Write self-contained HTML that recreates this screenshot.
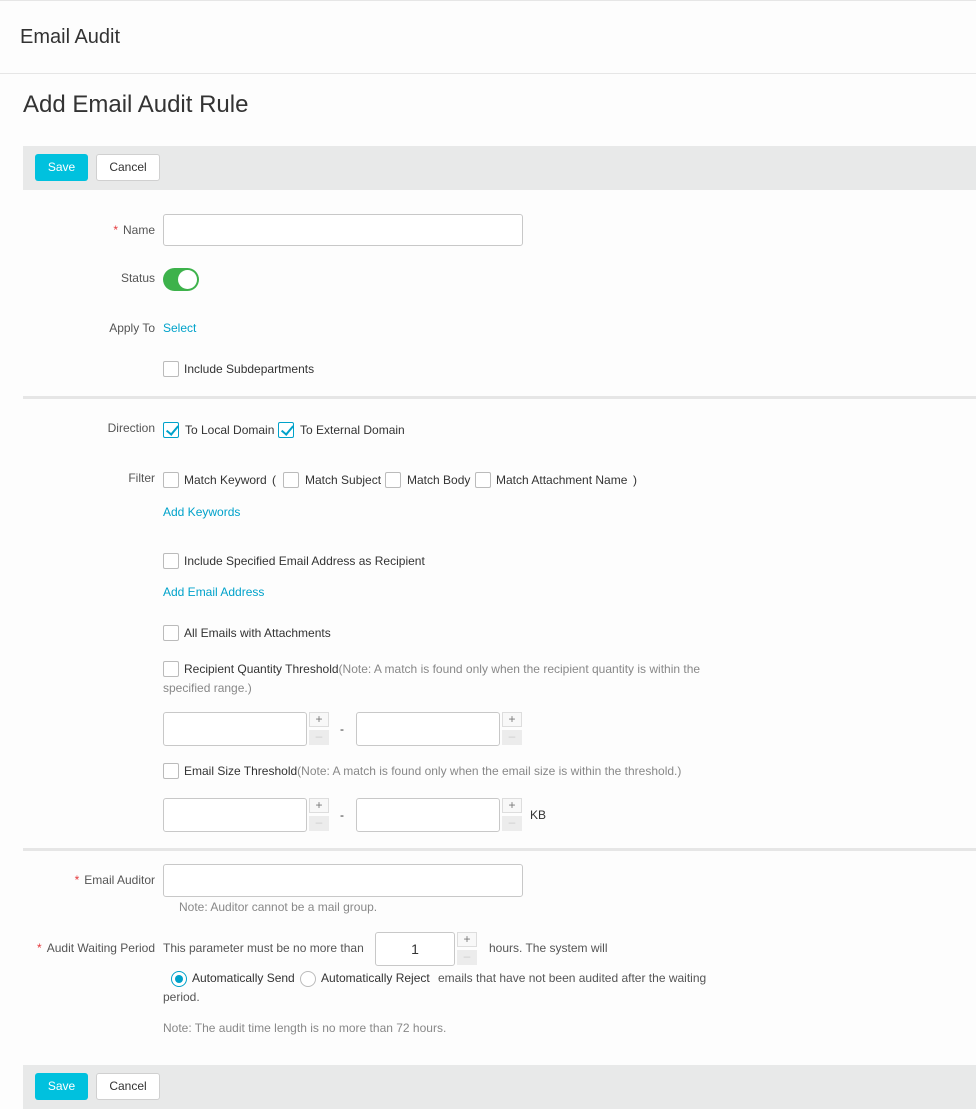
<!DOCTYPE html>
<html><head><meta charset="utf-8"><style>
*{box-sizing:border-box;margin:0;padding:0}
body{width:976px;height:1107px;background:#fdfdfd;font-family:"Liberation Sans",Arial,sans-serif;font-size:12px;color:#333;position:relative;overflow:hidden}
.a{position:absolute;white-space:nowrap}
.lbl{position:absolute;right:821px;color:#555;font-size:12px;white-space:nowrap}
.star{color:#e4393c;margin-right:5px}
.inp{position:absolute;border:1px solid #c8c8c8;border-radius:3px;background:#fff}
.cb{position:absolute;width:16px;height:16px;border:1px solid #bbb;border-radius:2px;background:#fff}
.cb.on{border-color:#00a2ca}
.cb.on:after{content:"";position:absolute;left:5px;top:0px;width:5px;height:10px;border:solid #00a2ca;border-width:0 2px 2px 0;transform:rotate(40deg)}
.link{color:#00a2ca}
.note{color:#888}
.bar{position:absolute;left:23px;width:953px;height:44px;background:#e8e9e9}
.save{position:absolute;left:12px;top:8px;width:53px;height:27px;background:#00c1de;color:#fff;border-radius:3px;text-align:center;line-height:27px}
.cancel{position:absolute;left:73px;top:8px;width:64px;height:27px;background:#fff;border:1px solid #d0d0d0;border-radius:3px;text-align:center;line-height:25px;color:#333}
.div{position:absolute;left:23px;width:953px;height:3px;background:#e6e6e6}
.sp{position:absolute;width:20px;height:15px;border:1px solid #ddd;background:#f8f8f8;color:#777;text-align:center;line-height:12px;font-size:12px}
.sm{position:absolute;width:20px;height:15px;background:#ececec;color:#ccc;text-align:center;line-height:12px}
</style></head><body>
<div class="a" style="left:0;top:0;width:976px;height:1px;background:#e6e6e6"></div>
<div class="a" style="left:20px;top:26px;font-size:20px;color:#333">Email Audit</div>
<div class="a" style="left:0;top:73px;width:976px;height:1px;background:#e6e6e6"></div>
<div class="a" style="left:23px;top:91px;font-size:24px;color:#333">Add Email Audit Rule</div>
<div class="bar" style="top:146px"><div class="save">Save</div><div class="cancel">Cancel</div></div>

<div class="lbl" style="top:223px"><span class="star">*</span>Name</div>
<div class="inp" style="left:163px;top:214px;width:360px;height:32px"></div>
<div class="lbl" style="top:271px">Status</div>
<div class="a" style="left:163px;top:268px;width:36px;height:23px;border-radius:12px;background:#3db24b"><div style="position:absolute;right:2px;top:2px;width:19px;height:19px;border-radius:50%;background:#fff"></div></div>
<div class="lbl" style="top:321px">Apply To</div>
<div class="a link" style="left:163px;top:321px">Select</div>
<div class="cb" style="left:163px;top:361px"></div><div class="a" style="left:184px;top:362px">Include Subdepartments</div>

<div class="div" style="top:396px"></div>

<div class="lbl" style="top:421px">Direction</div>
<div class="cb on" style="left:163px;top:422px"></div><div class="a" style="left:185px;top:423px">To Local Domain</div>
<div class="cb on" style="left:278px;top:422px"></div><div class="a" style="left:300px;top:423px">To External Domain</div>

<div class="lbl" style="top:471px">Filter</div>
<div class="cb" style="left:163px;top:472px"></div><div class="a" style="left:184px;top:473px">Match Keyword</div><div class="a" style="left:272px;top:473px">(</div>
<div class="cb" style="left:283px;top:472px"></div><div class="a" style="left:305px;top:473px">Match Subject</div>
<div class="cb" style="left:385px;top:472px"></div><div class="a" style="left:407px;top:473px">Match Body</div>
<div class="cb" style="left:475px;top:472px"></div><div class="a" style="left:496px;top:473px">Match Attachment Name</div><div class="a" style="left:633px;top:473px">)</div>
<div class="a link" style="left:163px;top:505px">Add Keywords</div>
<div class="cb" style="left:163px;top:553px"></div><div class="a" style="left:184px;top:554px">Include Specified Email Address as Recipient</div>
<div class="a link" style="left:163px;top:585px">Add Email Address</div>
<div class="cb" style="left:163px;top:625px"></div><div class="a" style="left:184px;top:626px">All Emails with Attachments</div>
<div class="cb" style="left:163px;top:661px"></div><div class="a" style="left:184px;top:662px">Recipient Quantity Threshold<span class="note">(Note: A match is found only when the recipient quantity is within the</span></div>
<div class="a note" style="left:163px;top:681px">specified range.)</div>

<div class="inp" style="left:163px;top:712px;width:144px;height:34px"></div>
<div class="sp" style="left:309px;top:712px">+</div><div class="sm" style="left:309px;top:730px">–</div>
<div class="a" style="left:340px;top:722px">-</div>
<div class="inp" style="left:356px;top:712px;width:144px;height:34px"></div>
<div class="sp" style="left:502px;top:712px">+</div><div class="sm" style="left:502px;top:730px">–</div>

<div class="cb" style="left:163px;top:763px"></div><div class="a" style="left:184px;top:764px">Email Size Threshold<span class="note">(Note: A match is found only when the email size is within the threshold.)</span></div>
<div class="inp" style="left:163px;top:798px;width:144px;height:34px"></div>
<div class="sp" style="left:309px;top:798px">+</div><div class="sm" style="left:309px;top:816px">–</div>
<div class="a" style="left:340px;top:808px">-</div>
<div class="inp" style="left:356px;top:798px;width:144px;height:34px"></div>
<div class="sp" style="left:502px;top:798px">+</div><div class="sm" style="left:502px;top:816px">–</div>
<div class="a" style="left:530px;top:808px">KB</div>

<div class="div" style="top:848px"></div>

<div class="lbl" style="top:873px"><span class="star">*</span>Email Auditor</div>
<div class="inp" style="left:163px;top:864px;width:360px;height:33px"></div>
<div class="a note" style="left:179px;top:900px">Note: Auditor cannot be a mail group.</div>

<div class="lbl" style="top:941px"><span class="star">*</span>Audit Waiting Period</div>
<div class="a" style="left:163px;top:941px;color:#555">This parameter must be no more than</div>
<div class="inp" style="left:375px;top:932px;width:80px;height:34px;text-align:center;line-height:32px;font-size:14px;color:#333">1</div>
<div class="sp" style="left:457px;top:932px">+</div><div class="sm" style="left:457px;top:950px">–</div>
<div class="a" style="left:489px;top:941px;color:#555">hours. The system will</div>
<div class="a" style="left:171px;top:971px;width:16px;height:16px;border:1px solid #00a2ca;border-radius:50%;background:#fff"><div style="position:absolute;left:3px;top:3px;width:8px;height:8px;border-radius:50%;background:#00a2ca"></div></div>
<div class="a" style="left:192px;top:971px">Automatically Send</div>
<div class="a" style="left:300px;top:971px;width:16px;height:16px;border:1px solid #bbb;border-radius:50%;background:#fff"></div>
<div class="a" style="left:321px;top:971px">Automatically Reject</div>
<div class="a" style="left:438px;top:971px;color:#555">emails that have not been audited after the waiting</div>
<div class="a" style="left:163px;top:990px;color:#555">period.</div>
<div class="a note" style="left:163px;top:1021px">Note: The audit time length is no more than 72 hours.</div>

<div class="bar" style="top:1065px"><div class="save">Save</div><div class="cancel">Cancel</div></div>
</body></html>
